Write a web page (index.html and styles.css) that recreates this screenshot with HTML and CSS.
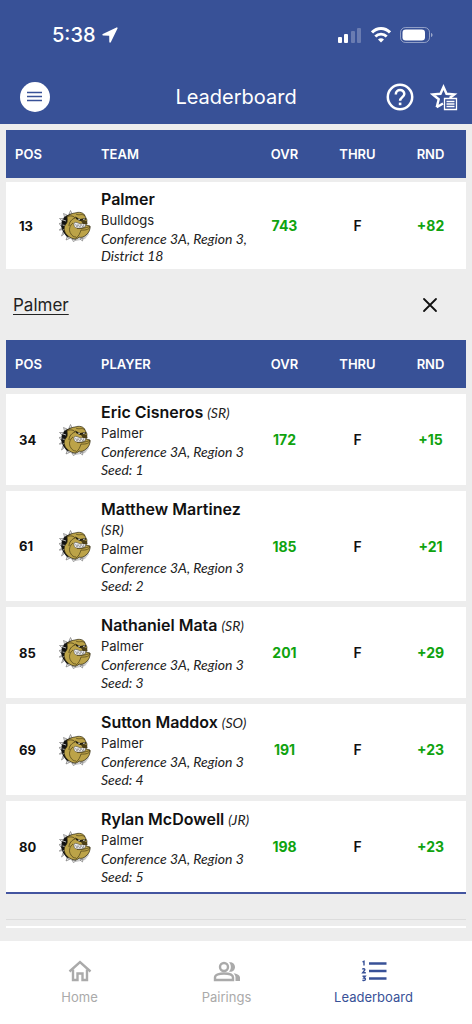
FILE: index.html
```html
<!DOCTYPE html>
<html lang="en">
<head>
    <meta charset="UTF-8">
    <meta name="viewport" content="width=device-width, initial-scale=1.0">
    <title>Leaderboard</title>

    <!-- CSS Styling -->
    <link rel="stylesheet" href="styles.css">
</head>
<body>

    <!-- Shared bulldog logo -->
    <svg class="sprite" aria-hidden="true">
        <symbol id="bulldog" viewBox="0 0 32 32">
            <path d="M5 22 L9 28 L17 31 L26 29 L30 24 L27 20Z" fill="#c9c9c9"/>
            <path d="M11 4 L6 6 L3 10 L2 16 L4 22 L8 27 L12 26 L12 8Z" fill="#111"/>
            <path d="M10 4 L11.500 .500 L13 3.500Z M5.500 7 L4.500 3.500 L8 5Z M3 11 L.500 8.500 L4.500 8.500Z M2 16 L0 13.500 L3 13Z M2.500 20 L.200 20 L3 18Z M5 24 L2.500 26 L4 22Z M8 27 L7 30 L10.500 28.500Z M13 29 L14.500 31.800 L17 29.500Z M21 29 L23.500 31 L24 28Z" fill="#e8e8e8" stroke="#555" stroke-width=".5"/>
            <path d="M4 10 L7 11 M3.500 15 L6 15.500 M4 20 L6 19" stroke="#ddd" stroke-width=".8"/>
            <path d="M8 6 C11 5 13 3 16 3 C20 1.500 25 2.500 26 6 L28 10 L27 15 L31 16 C31.500 19 30 23 27 25 C25 27 22 28 20 27 C17 31 11 28 8 25 C5 22 4 17 7 14 C9 12 8 9 8 6Z" fill="#bca348" stroke="#2d2710" stroke-width=".7"/>
            <path d="M8 7 C11 5 15 6 16 8 C13 9 10 12 10 16" fill="none" stroke="#4a3d16" stroke-width=".8"/>
            <path d="M16 6.500 L21 9 L27 8 L26.500 10.500 L21 11 L17 9Z" fill="#242012"/>
            <path d="M19 9 L21 9.800 M24 9.500 L26 9" stroke="#fff" stroke-width=".7"/>
            <path d="M15 13 C17 11.500 19 13 21 14 L27 13 L26 17 L21 18.500 L18 18 C15.500 18 14.500 15.500 15 13Z" fill="#eee" stroke="#333" stroke-width=".5"/>
            <path d="M16.500 14 L18 17 L19 14.500 L21 17.500 L22 14.500 L24 17 L25 14" fill="none" stroke="#555" stroke-width=".5"/>
            <path d="M22 11 L28 11 L28.500 14 L24 14Z" fill="#4d4019"/>
            <path d="M18 18.500 C22 19 26 18 31 16.500 C31 19 27 20.500 22 20 C21 23 20 26 17 28 M14 13 C11 15 9 20 12 24 C13 26 15 27 17 27 M17 4 C20 6 23 3 26 6" fill="none" stroke="#4a3d16" stroke-width=".7"/>
        </symbol>
    </svg>

    <!-- Header -->
    <header class="header">
        <div class="status-bar">
            <div class="status-time">
                <span>5:38</span>
                <svg width="16" height="16" viewBox="0 0 16 16"><path d="M15.300.500a.7.7 0 0 0-.8-.1L.8 7.100C0 7.600.3 8.600 1.100 8.600L7.200 8.700L7.300 14.800C7.300 15.800 8.400 16 8.800 15.200L15.500 1.400A.7.7 0 0 0 15.300.500Z" fill="#fff"/></svg>
            </div>
            <div class="status-icons">
                <svg width="24" height="16" viewBox="0 0 24 16" fill="#fff">
                    <rect x="0" y="10" width="4" height="6" rx="1"/>
                    <rect x="6" y="7" width="4" height="9" rx="1"/>
                    <rect x="13" y="4" width="4" height="12" rx="1" opacity=".25"/>
                    <rect x="19" y="1" width="4" height="15" rx="1" opacity=".25"/>
                </svg>
                <svg width="20" height="16" viewBox="0 0 20 16" fill="none" stroke="#fff">
                    <path d="M1 5.500C6 .200 14 .200 19 5.500" stroke-width="3"/>
                    <path d="M4.300 9.500C7.500 6.300 12.500 6.300 15.700 9.500" stroke-width="2.800"/>
                    <path d="M10 15.600L7 12.400C8.700 10.900 11.300 10.900 13 12.400Z" fill="#fff" stroke="none"/>
                </svg>
                <svg width="33" height="16" viewBox="0 0 33 16">
                    <rect x=".5" y=".5" width="29" height="15" rx="5" fill="none" stroke="#fff" opacity=".45"/>
                    <rect x="2.500" y="2.500" width="22.500" height="11" rx="3.300" fill="#fff"/>
                    <path d="M31 6C33 6.500 33 9.500 31 10Z" fill="#fff" opacity=".5"/>
                </svg>
            </div>
        </div>
        <div class="title-bar">
            <button type="button" class="icon-btn menu-btn" aria-label="Menu">
                <svg width="30" height="30" viewBox="0 0 30 30"><circle cx="15" cy="15" r="15" fill="#fff"/><path d="M7 10.500H22M7 14.500H22M7 18.500H22" stroke="#385197" stroke-width="1.700"/></svg>
            </button>
            <h1>Leaderboard</h1>
            <div class="actions">
                <button type="button" class="icon-btn" aria-label="Help">
                    <svg width="28" height="28" viewBox="0 0 28 28" fill="none" stroke="#fff" stroke-width="2.500"><circle cx="14" cy="14" r="12.200"/><path d="M9.800 11.400C9.800 5.500 18.300 5.700 18.300 11C18.300 14 14.100 14.300 14.100 17.800"/><path d="M12.800 20.900H15.400" stroke-width="2.600"/></svg>
                </button>
                <button type="button" class="icon-btn" aria-label="Favorites">
                    <svg width="28" height="28" viewBox="0 0 28 28" fill="none" stroke="#fff"><path d="M6.700 24.200L8.700 16.300L2.800 11.400L10.500 10.800L13.500 4L16.500 10.800L24.300 11.400L19.700 15M6.700 24.200L13 20.500" stroke-width="2.400"/><path d="M14.500 15.500H26.500V26.500H14.500Z" fill="#385197" stroke-width="1.300"/><path d="M16.500 18.500H24.500M16.500 21H24.500M16.500 23.500H24.500" stroke-width="1.300"/></svg>
                </button>
            </div>
        </div>
    </header>

    <main class="content">
        <!-- Team Table -->
        <table class="board team-board">
            <thead>
                <tr><th class="pos">POS</th><th class="logo" aria-label="Logo"></th><th class="name">TEAM</th><th class="score total">OVR</th><th class="score">THRU</th><th class="score">RND</th></tr>
            </thead>
            <tbody>
                <tr>
                    <td class="pos">13</td>
                    <td class="logo"><svg><use href="#bulldog"/></svg></td>
                    <td class="name">
                        <div class="title"><strong>Palmer</strong></div>
                        <div class="school">Bulldogs</div>
                        <div class="region">Conference 3A, Region 3, District 18</div>
                    </td>
                    <td class="score total over">743</td><td class="score">F</td><td class="score over">+82</td>
                </tr>
            </tbody>
        </table>

        <!-- Selected Team -->
        <div class="selected">
            <a href="#">Palmer</a>
            <button type="button" class="icon-btn" aria-label="Close">
                <svg width="16" height="16" viewBox="0 0 16 16"><path d="M2 2L14 14M14 2L2 14" stroke="#111" stroke-width="1.800" stroke-linecap="round"/></svg>
            </button>
        </div>

        <!-- Player Table -->
        <table class="board player-board">
            <thead>
                <tr><th class="pos">POS</th><th class="logo" aria-label="Logo"></th><th class="name">PLAYER</th><th class="score total">OVR</th><th class="score">THRU</th><th class="score">RND</th></tr>
            </thead>
            <tbody>
                <tr>
                    <td class="pos">34</td>
                    <td class="logo"><svg><use href="#bulldog"/></svg></td>
                    <td class="name">
                        <div class="title"><strong>Eric Cisneros</strong> <em>(SR)</em></div>
                        <div class="school">Palmer</div>
                        <div class="region">Conference 3A, Region 3</div>
                        <div class="seed">Seed: 1</div>
                    </td>
                    <td class="score total over">172</td><td class="score">F</td><td class="score over">+15</td>
                </tr>
                <tr>
                    <td class="pos">61</td>
                    <td class="logo"><svg><use href="#bulldog"/></svg></td>
                    <td class="name">
                        <div class="title"><strong>Matthew Martinez</strong> <em>(SR)</em></div>
                        <div class="school">Palmer</div>
                        <div class="region">Conference 3A, Region 3</div>
                        <div class="seed">Seed: 2</div>
                    </td>
                    <td class="score total over">185</td><td class="score">F</td><td class="score over">+21</td>
                </tr>
                <tr>
                    <td class="pos">85</td>
                    <td class="logo"><svg><use href="#bulldog"/></svg></td>
                    <td class="name">
                        <div class="title"><strong>Nathaniel Mata</strong> <em>(SR)</em></div>
                        <div class="school">Palmer</div>
                        <div class="region">Conference 3A, Region 3</div>
                        <div class="seed">Seed: 3</div>
                    </td>
                    <td class="score total over">201</td><td class="score">F</td><td class="score over">+29</td>
                </tr>
                <tr>
                    <td class="pos">69</td>
                    <td class="logo"><svg><use href="#bulldog"/></svg></td>
                    <td class="name">
                        <div class="title"><strong>Sutton Maddox</strong> <em>(SO)</em></div>
                        <div class="school">Palmer</div>
                        <div class="region">Conference 3A, Region 3</div>
                        <div class="seed">Seed: 4</div>
                    </td>
                    <td class="score total over">191</td><td class="score">F</td><td class="score over">+23</td>
                </tr>
                <tr>
                    <td class="pos">80</td>
                    <td class="logo"><svg><use href="#bulldog"/></svg></td>
                    <td class="name">
                        <div class="title"><strong>Rylan McDowell</strong> <em>(JR)</em></div>
                        <div class="school">Palmer</div>
                        <div class="region">Conference 3A, Region 3</div>
                        <div class="seed">Seed: 5</div>
                    </td>
                    <td class="score total over">198</td><td class="score">F</td><td class="score over">+23</td>
                </tr>
            </tbody>
        </table>
        <div class="board-end"></div>
    </main>

    <!-- Bottom Navigation -->
    <nav class="tabs">
        <a href="#" class="tab">
            <svg width="24" height="24" viewBox="0 0 24 24" fill="none" stroke="currentColor" stroke-width="2.400"><path d="M1.500 12.500L12 3L22.500 12.500"/><path d="M5 10.500V21H9.500V14.500H14.500V21H19V10.500"/></svg>
            <span>Home</span>
        </a>
        <a href="#" class="tab">
            <svg width="28" height="24" viewBox="0 0 28 24" fill="currentColor"><circle cx="11" cy="8" r="4" fill="none" stroke="currentColor" stroke-width="2.400"/><path d="M2 21V18.500C2 15.500 7 14.500 11 14.500S20 15.500 20 18.500V21Z" fill="none" stroke="currentColor" stroke-width="2.400"/><path d="M16 3.300C19.500 2.500 22 5 22 8S19.500 13.500 16 12.700C18.500 10 18.500 6 16 3.300Z"/><path d="M20.500 14.300C24 14.900 27 16.200 27 18.500V22H22.500V18.500C22.500 16.800 21.800 15.400 20.500 14.300Z"/></svg>
            <span>Pairings</span>
        </a>
        <a href="#" class="tab active">
            <svg width="26" height="24" viewBox="0 0 26 24" fill="none" stroke="currentColor"><path d="M8 4.500H25.500M8 12H25.500M8 19.500H25.500" stroke-width="2.600"/><path d="M1.500 2.800L3 2.300V6.500M1.500 10.500C1.800 9.300 4.200 9.500 3.800 11L1.700 13.700H4.800M1.500 17.300H4.200L2.800 19C5.200 19 4.800 21.500 2.700 21.500L1.400 21.200" stroke-width="1.400"/></svg>
            <span>Leaderboard</span>
        </a>
    </nav>

</body>
</html>
```
FILE: styles.css
```css
* {
    margin: 0;
    padding: 0;
    box-sizing: border-box;
}
body {
    display: flex;
    flex-direction: column;
    min-height: 100vh;
    background-color: #ededed;
    color: #111;
    font-family: 'Inter', sans-serif;
    font-size: 14px;
}
svg {
    display: block;
}
.sprite {
    position: absolute;
    width: 0;
    height: 0;
}

/* Header */
.header {
    background-color: #385197;
    color: #fff;
}
.status-bar {
    display: flex;
    justify-content: space-between;
    align-items: center;
    height: 70px;
    padding: 0 39px 0 52px;
}
.status-time {
    display: flex;
    align-items: center;
    gap: 6px;
    font-size: 20px;
    font-weight: 500;
}
.status-icons {
    display: flex;
    align-items: center;
    gap: 9px;
}
.title-bar {
    display: grid;
    grid-template-columns: 1fr auto 1fr;
    align-items: center;
    height: 54px;
    padding: 0 14px 0 20px;
}
.title-bar h1 {
    margin-right: 6px;
    font-size: 20px;
    font-weight: 400;
}
.actions {
    display: flex;
    justify-content: flex-end;
    gap: 16px;
}
.icon-btn {
    background: none;
    border: none;
    cursor: pointer;
}
.menu-btn {
    justify-self: start;
}

/* Tables */
.content {
    flex: 1;
    padding: 6px 6px 13px;
}
.board {
    width: 100%;
    table-layout: fixed;
    border-collapse: separate;
    border-spacing: 0;
}
.board th {
    height: 48px;
    background-color: #385197;
    color: #fff;
    font-size: 13px;
    font-weight: 600;
}
.board td {
    background-color: #fff;
    border-top: 6px solid #ededed;
}
.team-board td {
    border-top-width: 4px;
}
.board .pos {
    width: 46px;
    padding-left: 9px;
    text-align: left;
}
.board td.pos {
    padding-left: 13px;
    font-size: 13px;
    font-weight: 700;
}
.board .logo {
    width: 46px;
}
.logo svg {
    width: 32px;
    height: 32px;
    margin: 0 auto;
}
.board .name {
    padding-left: 3px;
    text-align: left;
}
.board td.name {
    padding-top: 7px;
    padding-bottom: 5px;
}
.team-board td.name {
    padding-top: 6px;
}
.board .score {
    width: 73px;
    padding-left: 2px;
    text-align: center;
}
.board .total {
    width: 67px;
    padding-left: 0;
    padding-right: 4px;
}
.board td.score {
    font-weight: 600;
}
.board td.over {
    color: #0fa30f;
    font-weight: 700;
}
.title {
    line-height: 19px;
}
.title strong {
    font-size: 16px;
    font-weight: 600;
    line-height: 22px;
}
.title em, .region, .seed {
    font-family: 'Lato', sans-serif;
    font-size: 14px;
    font-style: italic;
    color: #222;
}
.school {
    line-height: 20px;
    font-size: 13px;
    color: #222;
}
.region {
    line-height: 17px;
}
.seed {
    line-height: 20px;
}
.board-end {
    height: 36px;
    border-top: 2px solid #4355a0;
    border-bottom: 2px solid #fff;
    background: linear-gradient(#dcdcdc, #dcdcdc) 0 25px / 100% 1px no-repeat;
}

/* Selected team */
.selected {
    display: flex;
    justify-content: space-between;
    align-items: center;
    height: 71px;
    padding: 0 28px 0 7px;
}
.selected a {
    color: #222;
    font-size: 17px;
    text-underline-offset: 3px;
}

/* Bottom navigation */
.tabs {
    display: flex;
    height: 84px;
    padding: 18px 25px 0 6px;
    background-color: #fff;
}
.tab {
    flex: 1;
    display: flex;
    flex-direction: column;
    align-items: center;
    gap: 6px;
    color: #aaa;
    font-size: 13px;
    text-decoration: none;
}
.tab.active {
    color: #385197;
}
```
